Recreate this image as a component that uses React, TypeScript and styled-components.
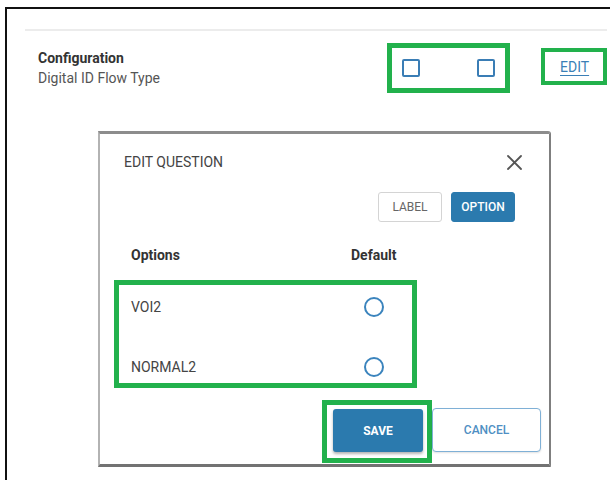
import React from "react";
import styled, { createGlobalStyle } from "styled-components";

const GlobalStyle = createGlobalStyle`
  html, body {
    margin: 0;
    padding: 0;
    background: #ffffff;
  }
  body {
    font-family: Roboto, "Liberation Sans", Arial, sans-serif;
    color: #333;
  }
`;

const GREEN = "#22b14c";
const BLUE = "#2b7aae";

const Page = styled.div`
  padding: 7px 0 0 5px;
  height: 100vh;
  box-sizing: border-box;
`;

const Frame = styled.div`
  position: relative;
  height: 100%;
  box-sizing: border-box;
  border-top: 2px solid #111;
  border-left: 2px solid #111;
  overflow: hidden;
`;

const Divider = styled.div`
  margin: 20px 3px 0 18px;
  height: 2px;
  background: #ececec;
`;

const SettingRow = styled.div<{ $gap: number }>`
  display: flex;
  align-items: flex-start;
  margin-top: ${(p) => p.$gap}px;
  padding: 0 3px 0 31px;
`;

const LabelBlock = styled.div`
  flex: 1;
  margin-top: 5px;
  font-size: 14px;
  line-height: 20px;
`;

const SettingTitle = styled.div`
  font-weight: 700;
  color: #333;
`;

const SettingSub = styled.div`
  color: #555;
`;

const CheckGroup = styled.div<{ $highlighted?: boolean }>`
  display: flex;
  gap: 57px;
  padding: 11px 10px;
  margin-right: 31px;
  border: 5px solid ${(p) => (p.$highlighted ? GREEN : "transparent")};
`;

const CheckBox = styled.span`
  display: block;
  width: 18px;
  height: 18px;
  box-sizing: border-box;
  border: 2px solid #3a7db5;
  border-radius: 2px;
  background: #fff;
`;

const EditBox = styled.div<{ $hidden?: boolean }>`
  visibility: ${(p) => (p.$hidden ? "hidden" : "visible")};
  width: 66px;
  height: 37px;
  box-sizing: border-box;
  margin-top: 5px;
  border: 4px solid ${GREEN};
  display: flex;
  align-items: center;
  padding-left: 15px;
`;

const EditLink = styled.a`
  font-size: 14px;
  line-height: 18px;
  color: #3b7fb6;
  text-decoration: underline;
  text-underline-offset: 3px;
  cursor: pointer;
`;

/* Dialog floating over the settings list */
const Modal = styled.div`
  position: absolute;
  left: 91px;
  top: 122px;
  width: 453px;
  height: 336px;
  box-sizing: border-box;
  background: #fff;
  border-top: 3px solid rgba(0, 0, 0, 0.45);
  border-left: 2px solid rgba(0, 0, 0, 0.3);
  border-right: 2px solid rgba(0, 0, 0, 0.5);
  border-bottom: 3px solid rgba(0, 0, 0, 0.55);
  border-top-right-radius: 3px;
  display: flex;
  flex-direction: column;
`;

const ModalHeader = styled.div`
  display: flex;
  align-items: center;
  justify-content: space-between;
  padding: 19px 27px 0 24px;
`;

const ModalTitle = styled.h2`
  margin: 0;
  font-size: 14px;
  line-height: 18px;
  font-weight: 400;
  color: #444;
`;

const CloseButton = styled.button`
  border: 0;
  padding: 0;
  background: none;
  width: 15px;
  height: 15px;
  display: flex;
  cursor: pointer;
`;

const TabRow = styled.div`
  display: flex;
  justify-content: flex-end;
  gap: 9px;
  margin-top: 21px;
  padding-right: 34px;
`;

const TabButton = styled.button<{ $active?: boolean }>`
  width: 64px;
  height: 30px;
  box-sizing: border-box;
  border-radius: 3px;
  font-family: inherit;
  font-size: 12px;
  font-weight: ${(p) => (p.$active ? 500 : 400)};
  border: 1px solid ${(p) => (p.$active ? BLUE : "#d4d4d4")};
  background: ${(p) => (p.$active ? BLUE : "#fff")};
  color: ${(p) => (p.$active ? "#fff" : "#666")};
  cursor: pointer;
`;

const ColumnHeader = styled.div`
  display: grid;
  grid-template-columns: 220px 46px;
  margin-top: 24px;
  padding-left: 31px;
  font-size: 14px;
  line-height: 18px;
  font-weight: 700;
  color: #333;
`;

const OptionList = styled.div`
  margin: 16px 0 0 14px;
  width: 303px;
  height: 108px;
  box-sizing: border-box;
  border: 5px solid ${GREEN};
  padding: 7px 0 0 12px;
  display: flex;
  flex-direction: column;
  gap: 30px;
`;

const OptionRow = styled.div`
  display: grid;
  grid-template-columns: 220px 46px;
  align-items: center;
  height: 30px;
  font-size: 14px;
  color: #444;
`;

const Radio = styled.span`
  justify-self: center;
  width: 20px;
  height: 20px;
  box-sizing: border-box;
  border: 2px solid #3b84bd;
  border-radius: 50%;
`;

const Footer = styled.div`
  display: flex;
  justify-content: flex-end;
  align-items: flex-start;
  margin-top: 12px;
  padding-right: 8px;
`;

const SaveHighlight = styled.div`
  border: 5px solid ${GREEN};
  padding: 4px 4px 6px 6px;
`;

const SaveButton = styled.button`
  width: 90px;
  height: 43px;
  border: 0;
  border-radius: 3px;
  background: ${BLUE};
  color: #fff;
  font-family: inherit;
  font-size: 12px;
  font-weight: 700;
  box-shadow: 0 2px 3px rgba(0, 0, 0, 0.3);
  cursor: pointer;
`;

const CancelButton = styled.button`
  margin-top: 8px;
  width: 109px;
  height: 44px;
  box-sizing: border-box;
  border: 1px solid #7fb0d6;
  border-radius: 4px;
  background: #fff;
  color: #4f8fc3;
  font-family: inherit;
  font-size: 12px;
  font-weight: 500;
  box-shadow: 0 1px 2px rgba(0, 0, 0, 0.12);
  cursor: pointer;
`;

const CloseIcon = () => (
  <svg width="15" height="15" viewBox="0 0 15 15" fill="none">
    <path d="M1 1L14 14M14 1L1 14" stroke="#555" strokeWidth="1.8" strokeLinecap="round" />
  </svg>
);

const options = ["VOI2", "NORMAL2"];

export default function App() {
  return (
    <>
      <GlobalStyle />
      <Page>
        <Frame>
          <Divider />
          <SettingRow $gap={12}>
            <LabelBlock>
              <SettingTitle>Configuration</SettingTitle>
              <SettingSub>Digital ID Flow Type</SettingSub>
            </LabelBlock>
            <CheckGroup $highlighted>
              <CheckBox />
              <CheckBox />
            </CheckGroup>
            <EditBox>
              <EditLink>EDIT</EditLink>
            </EditBox>
          </SettingRow>
          <SettingRow $gap={22}>
            <LabelBlock />
            <CheckGroup>
              <CheckBox />
              <CheckBox />
            </CheckGroup>
            <EditBox $hidden />
          </SettingRow>

          <Modal role="dialog">
            <ModalHeader>
              <ModalTitle>EDIT QUESTION</ModalTitle>
              <CloseButton aria-label="Close">
                <CloseIcon />
              </CloseButton>
            </ModalHeader>
            <TabRow>
              <TabButton>LABEL</TabButton>
              <TabButton $active>OPTION</TabButton>
            </TabRow>
            <ColumnHeader>
              <span>Options</span>
              <span>Default</span>
            </ColumnHeader>
            <OptionList>
              {options.map((o) => (
                <OptionRow key={o}>
                  <span>{o}</span>
                  <Radio />
                </OptionRow>
              ))}
            </OptionList>
            <Footer>
              <SaveHighlight>
                <SaveButton>SAVE</SaveButton>
              </SaveHighlight>
              <CancelButton>CANCEL</CancelButton>
            </Footer>
          </Modal>
        </Frame>
      </Page>
    </>
  );
}
